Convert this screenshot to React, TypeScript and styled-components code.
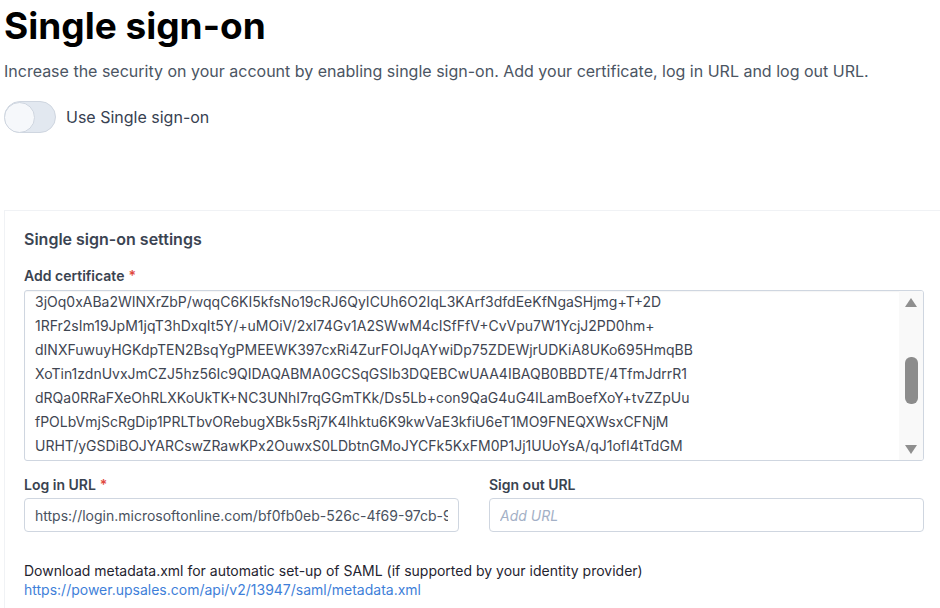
import React from "react";
import styled, { createGlobalStyle } from "styled-components";

const GlobalStyle = createGlobalStyle`
  html, body {
    margin: 0;
    padding: 0;
    background: #ffffff;
    overflow: hidden;
  }
  body {
    font-family: Inter, "Noto Sans", "Liberation Sans", sans-serif;
    color: #1f2937;
  }
  * { box-sizing: border-box; }
`;

const Page = styled.div`
  width: 962px;
  padding: 3px 0 40px 4px;
  display: flex;
  flex-direction: column;
`;

const Title = styled.h1`
  margin: 0;
  font-size: 37px;
  line-height: 45px;
  font-weight: 700;
  color: #000000;
`;

const Description = styled.p`
  margin: 13px 0 0;
  font-size: 16px;
  line-height: 20px;
  color: #4b5563;
`;

const ToggleRow = styled.label`
  margin-top: 20px;
  display: flex;
  align-items: center;
  gap: 10px;
  height: 32px;
  font-size: 16px;
  color: #374151;
`;

const Track = styled.span<{ $on: boolean }>`
  width: 52px;
  height: 32px;
  border-radius: 16px;
  border: 1px solid #cfd6e0;
  background: ${(p) => (p.$on ? "#4a86e8" : "#e2e8f0")};
  display: flex;
  align-items: center;
  justify-content: ${(p) => (p.$on ? "flex-end" : "flex-start")};
`;

const Knob = styled.span`
  width: 31px;
  height: 31px;
  margin: -1px;
  border-radius: 50%;
  background: #f6f8fb;
  border: 1px solid #cfd6e0;
`;

const Card = styled.section`
  margin-top: 77px;
  border: 1px solid #f0f2f5;
  border-right: none;
  background: #ffffff;
  padding: 18px 19px 40px;
  display: flex;
  flex-direction: column;
`;

const CardTitle = styled.h2`
  margin: 0;
  font-size: 16px;
  line-height: 20px;
  font-weight: 600;
  color: #3b4452;
`;

const Field = styled.div<{ $top: number }>`
  margin-top: ${(p) => p.$top}px;
  display: flex;
  flex-direction: column;
  min-width: 0;
`;

const Label = styled.div<{ $gap?: number }>`
  font-size: 14px;
  line-height: 20px;
  font-weight: 600;
  color: #3a4350;
  margin-bottom: ${(p) => p.$gap ?? 4}px;
`;

const Required = styled.span`
  color: #e0483e;
  margin-left: 4px;
`;

const CertBox = styled.div`
  width: 900px;
  height: 171px;
  border: 1px solid #cfd6e0;
  border-radius: 3px;
  box-shadow: inset 0 1px 1px rgba(0, 0, 0, 0.04);
  display: flex;
  overflow: hidden;
`;

const CertText = styled.div`
  flex: 1;
  padding: 0 10px;
  margin-top: -1px;
  font-size: 14px;
  line-height: 24px;
  color: #3f4652;
  white-space: pre;
  overflow: hidden;
`;

const ScrollBar = styled.div`
  width: 24px;
  background: #f9f9f9;
  display: flex;
  flex-direction: column;
  align-items: center;
  padding: 7px 0 6px;
`;

const Arrow = styled.span<{ $down?: boolean }>`
  width: 0;
  height: 0;
  border-left: 6.5px solid transparent;
  border-right: 6.5px solid transparent;
  ${(p) =>
    p.$down
      ? "border-top: 9px solid #8f8f8f;"
      : "border-bottom: 9px solid #8f8f8f;"}
`;

const ThumbTrack = styled.div`
  flex: 1;
  width: 100%;
  display: flex;
  justify-content: center;
  padding-top: 50px;
`;

const Thumb = styled.span`
  width: 13px;
  height: 47px;
  border-radius: 6px;
  background: #8c8c8c;
`;

const Columns = styled.div`
  display: grid;
  grid-template-columns: 435px 435px;
  column-gap: 30px;
`;

const Input = styled.input`
  height: 34px;
  width: 100%;
  border: 1px solid #cfd6e0;
  border-radius: 4px;
  padding: 0 10px;
  font-family: Inter, "Noto Sans", "Liberation Sans", sans-serif;
  font-size: 14px;
  color: #4a5260;
  background: #ffffff;
  outline: none;
  &::placeholder {
    color: #a3b0c6;
    font-style: italic;
  }
`;

const Info = styled.div`
  margin-top: 29px;
  font-size: 14px;
  line-height: 19px;
  color: #1f2430;
`;

const Link = styled.a`
  display: block;
  color: #3f7fd9;
  text-decoration: none;
`;

const certLines = [
  "3jOq0xABa2WINXrZbP/wqqC6KI5kfsNo19cRJ6QyICUh6O2IqL3KArf3dfdEeKfNgaSHjmg+T+2D",
  "1RFr2sIm19JpM1jqT3hDxqIt5Y/+uMOiV/2xI74Gv1A2SWwM4cISfFfV+CvVpu7W1YcjJ2PD0hm+",
  "dINXFuwuyHGKdpTEN2BsqYgPMEEWK397cxRi4ZurFOIJqAYwiDp75ZDEWjrUDKiA8UKo695HmqBB",
  "XoTin1zdnUvxJmCZJ5hz56Ic9QIDAQABMA0GCSqGSIb3DQEBCwUAA4IBAQB0BBDTE/4TfmJdrrR1",
  "dRQa0RRaFXeOhRLXKoUkTK+NC3UNhI7rqGGmTKk/Ds5Lb+con9QaG4uG4ILamBoefXoY+tvZZpUu",
  "fPOLbVmjScRgDip1PRLTbvORebugXBk5sRj7K4Ihktu6K9kwVaE3kfiU6eT1MO9FNEQXWsxCFNjM",
  "URHT/yGSDiBOJYARCswZRawKPx2OuwxS0LDbtnGMoJYCFk5KxFM0P1Jj1UUoYsA/qJ1ofI4tTdGM",
];

export default function App() {
  return (
    <>
      <GlobalStyle />
      <Page>
        <Title>Single sign-on</Title>
        <Description>
          Increase the security on your account by enabling single sign-on. Add your certificate, log in URL and log out URL.
        </Description>
        <ToggleRow>
          <Track $on={false}>
            <Knob />
          </Track>
          Use Single sign-on
        </ToggleRow>
        <Card>
          <CardTitle>Single sign-on settings</CardTitle>
          <Field $top={17}>
            <Label>
              Add certificate<Required>*</Required>
            </Label>
            <CertBox>
              <CertText>{certLines.join("\n")}</CertText>
              <ScrollBar>
                <Arrow />
                <ThumbTrack>
                  <Thumb />
                </ThumbTrack>
                <Arrow $down />
              </ScrollBar>
            </CertBox>
          </Field>
          <Columns>
            <Field $top={14}>
              <Label $gap={3}>
                Log in URL<Required>*</Required>
              </Label>
              <Input readOnly value="https://login.microsoftonline.com/bf0fb0eb-526c-4f69-97cb-9a1c2e7d3f40/saml2" />
            </Field>
            <Field $top={14}>
              <Label $gap={3}>Sign out URL</Label>
              <Input readOnly placeholder="Add URL" />
            </Field>
          </Columns>
          <Info>
            Download metadata.xml for automatic set-up of SAML (if supported by your identity provider)
            <Link href="#">https://power.upsales.com/api/v2/13947/saml/metadata.xml</Link>
          </Info>
        </Card>
      </Page>
    </>
  );
}
